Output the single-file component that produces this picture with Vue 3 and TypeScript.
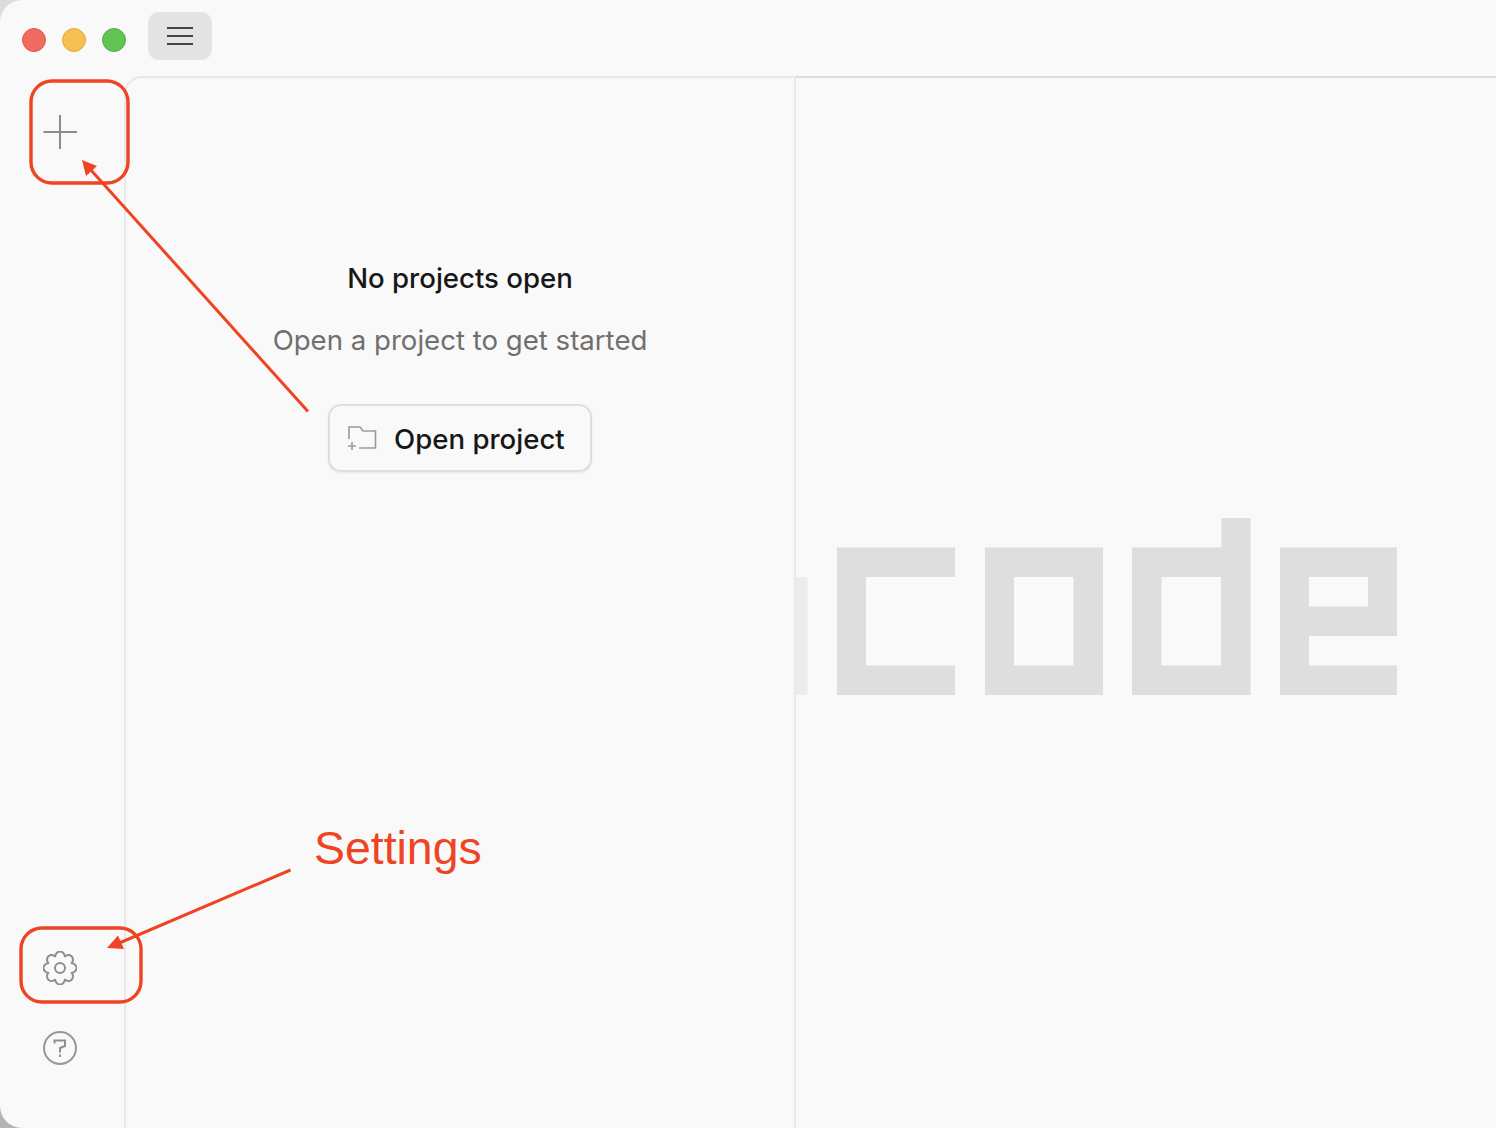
<script setup lang="ts">
const gearPoints: string[] = [];
for (let i = 0; i < 144; i++) {
  const a = (i / 144) * Math.PI * 2;
  const r = 12.6 + 3.9 * Math.pow(Math.abs(Math.cos(4 * a)), 0.8);
  gearPoints.push(`${(17 + r * Math.sin(a)).toFixed(2)} ${(17 - r * Math.cos(a)).toFixed(2)}`);
}
const gearPath = `M${gearPoints.join("L")}Z`;
</script>

<template>
  <div class="window">
    <header class="titlebar">
      <div class="lights">
        <span class="light red"></span>
        <span class="light yellow"></span>
        <span class="light green"></span>
      </div>
      <button class="menu" aria-label="Menu">
        <span></span><span></span><span></span>
      </button>
    </header>

    <div class="body">
      <aside class="sidebar">
        <svg class="icon" width="34" height="34" viewBox="0 0 34 34" fill="none">
          <path d="M17 0V34M0.500 17H34" stroke="#8c8c8c" stroke-width="2" />
        </svg>
        <div class="sidebar-bottom">
          <svg class="icon" width="34" height="34" viewBox="0 0 34 34" fill="none">
            <path :d="gearPath" stroke="#8f8f8f" stroke-width="2" stroke-linejoin="round" />
            <circle cx="17" cy="17" r="5" stroke="#8f8f8f" stroke-width="2" />
          </svg>
          <svg class="icon" width="34" height="34" viewBox="0 0 34 34" fill="none">
            <circle cx="17" cy="17" r="16" stroke="#989898" stroke-width="2" />
            <path d="M11.500 12.500V9.500H22V15L17 17V21.500" stroke="#8f8f8f" stroke-width="2" />
            <path d="M17 23.500V26" stroke="#8f8f8f" stroke-width="2" />
          </svg>
        </div>
      </aside>

      <div class="panel">
        <section class="projects">
          <h1 class="title">No projects open</h1>
          <p class="sub">Open a project to get started</p>
          <button class="open">
            <svg width="30" height="26" viewBox="0 0 30 26" fill="none">
              <path d="M2 14V2H13L16 6H28.500V23H12" stroke="#9a9a9a" stroke-width="1.6" />
              <path d="M1 21H9M5 17V25" stroke="#9a9a9a" stroke-width="1.6" />
            </svg>
            <span class="open-label">Open project</span>
          </button>
        </section>

        <section class="stage">
          <svg class="logo" width="700" height="177" viewBox="796 518 700 177" role="img" aria-label="opencode">
            <rect x="796" y="577" width="11.500" height="118" fill="#ececec" />
            <g fill="#dedede" fill-rule="evenodd">
              <path d="M837 547.500H955V577H866V665.500H955V695H837Z" />
              <path d="M985 547.500H1103V695H985ZM1014 577V665.500H1073.500V577Z" />
              <path d="M1132 547.500H1221.500V518H1250.500V695H1132ZM1161.500 577V665.500H1221V577Z" />
              <path d="M1280 547.500H1397V636H1309V665.500H1397V695H1280ZM1309 577V606.500H1368V577Z" />
            </g>
          </svg>
        </section>
      </div>
    </div>

    <svg class="marks" width="1496" height="1128" viewBox="0 0 1496 1128" fill="none" aria-hidden="true">
      <g stroke="#ee4423">
        <rect x="31" y="81" width="97" height="102" rx="21" stroke-width="3.400" />
        <rect x="21" y="928" width="120" height="74" rx="21" stroke-width="3.400" />
        <path d="M308 411.500L90 169" stroke-width="3" />
        <path d="M290.500 870L117 944" stroke-width="3" />
      </g>
      <path d="M82 160L97 166L86 176Z" fill="#ee4423" />
      <path d="M107 948L118 935.500L124 949Z" fill="#ee4423" />
    </svg>
    <div class="note">Settings</div>
  </div>
</template>

<style scoped>
.window {
  position: relative;
  width: 1496px;
  height: 1128px;
  display: flex;
  flex-direction: column;
  box-sizing: border-box;
  overflow: hidden;
  background: #f9f9f9;
  border-radius: 22px 0 0 22px;
  font-family: Inter, "Noto Sans", sans-serif;
}
.titlebar {
  height: 76px;
  flex: none;
  display: flex;
  align-items: flex-start;
  box-sizing: border-box;
  padding: 12px 0 0 22px;
}
.lights {
  display: flex;
  gap: 16px;
  margin-top: 16px;
}
.light {
  width: 24px;
  height: 24px;
  border-radius: 50%;
  box-sizing: border-box;
  border: 1px solid;
}
.red { background: #ef6b60; border-color: #dd5b52; }
.yellow { background: #f6bf50; border-color: #e3a93f; }
.green { background: #61c554; border-color: #54ad48; }
.menu {
  width: 64px;
  height: 48px;
  margin-left: 22px;
  padding: 0;
  border: none;
  border-radius: 11px;
  background: #e3e3e3;
  display: flex;
  flex-direction: column;
  align-items: center;
  justify-content: center;
  gap: 6px;
}
.menu span {
  width: 26px;
  height: 2px;
  background: #454343;
}
.body {
  flex: 1;
  min-height: 0;
  display: flex;
}
.sidebar {
  width: 124px;
  flex: none;
  box-sizing: border-box;
  padding: 39px 0 63px 43px;
  display: flex;
  flex-direction: column;
  justify-content: space-between;
}
.sidebar-bottom {
  display: flex;
  flex-direction: column;
  gap: 46px;
}
.icon {
  display: block;
}
.panel {
  flex: 1;
  min-width: 0;
  display: flex;
  border-top: 2px solid #e9e9e9;
  border-left: 2px solid #e9e9e9;
  border-top-left-radius: 18px;
}
.projects {
  width: 670px;
  flex: none;
  box-sizing: border-box;
  border-right: 2px solid #e9e9e9;
  padding-top: 182px;
  display: flex;
  flex-direction: column;
  align-items: center;
}
.title {
  margin: 0;
  font-size: 27.600px;
  line-height: 36px;
  font-weight: 500;
  color: #171717;
}
.sub {
  margin: 26px 0 0;
  font-size: 27.600px;
  line-height: 36px;
  font-weight: 400;
  color: #6f6f6f;
}
.open {
  margin-top: 46px;
  width: 264px;
  height: 68px;
  box-sizing: border-box;
  display: flex;
  align-items: center;
  gap: 17px;
  padding: 0 0 0 17px;
  background: #f9f9f9;
  border: 2px solid #dedede;
  border-radius: 13px;
  box-shadow: 0 1px 2px rgba(0, 0, 0, 0.08);
  font: 500 27.600px/36px Inter, "Noto Sans", sans-serif;
  color: #171717;
}
.open-label {
  padding-top: 2px;
}
.stage {
  flex: 1;
  min-width: 0;
  overflow: hidden;
  padding-top: 440px;
  border-top: 2px solid #dcdcdc;
  margin-top: -2px;
}
.logo {
  display: block;
}
.marks {
  position: absolute;
  inset: 0;
  pointer-events: none;
}
.note {
  position: absolute;
  left: 314px;
  top: 820px;
  font-family: "Liberation Sans", Arial, sans-serif;
  font-size: 46.400px;
  line-height: 56px;
  color: #ee4423;
}
</style>

<style>
html,
body {
  margin: 0;
  background: linear-gradient(180deg, #dcdcdc 0%, #b4b4b4 100%);
}
</style>
